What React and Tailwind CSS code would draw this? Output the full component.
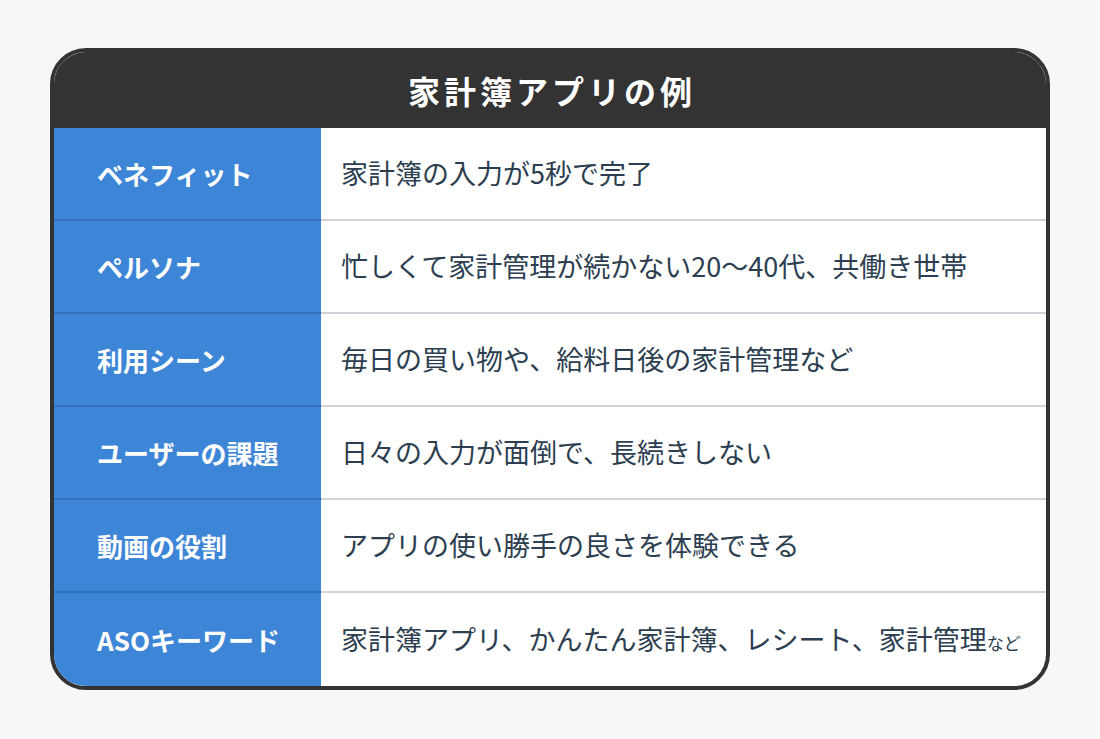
import React from "react";

const rows = [
  { label: "ベネフィット", text: "家計簿の入力が5秒で完了" },
  { label: "ペルソナ", text: "忙しくて家計管理が続かない20〜40代、共働き世帯" },
  { label: "利用シーン", text: "毎日の買い物や、給料日後の家計管理など" },
  { label: "ユーザーの課題", text: "日々の入力が面倒で、長続きしない" },
  { label: "動画の役割", text: "アプリの使い勝手の良さを体験できる" },
  { label: "ASOキーワード", text: "家計簿アプリ、かんたん家計簿、レシート、家計管理", small: "など" },
];

export default function App() {
  return (
    <div
      className="w-full h-screen bg-[#f7f7f7] flex justify-center pt-[48px]"
      style={{ fontFamily: '"Noto Sans CJK JP", "Noto Sans", sans-serif' }}
    >
      <div className="w-[1000px] h-[642px] border-4 border-[#333333] rounded-[36px] overflow-hidden flex flex-col bg-white">
        <div className="h-[76px] bg-[#333333] flex items-center justify-center text-white text-[32px] font-bold tracking-[4px] pl-[4px]">
          家計簿アプリの例
        </div>
        {rows.map((r, i) => (
          <div key={r.label} className="flex-1 flex">
            <div
              className={`w-[267px] bg-[#3d85d6] flex items-center pl-[43px] text-white text-[26px] font-bold ${
                i < rows.length - 1 ? "border-b-2 border-[#3470bb]" : ""
              }`}
            >
              {r.label}
            </div>
            <div
              className={`flex-1 flex items-center pl-[20px] text-[#2c3e50] text-[27px] whitespace-nowrap ${
                i < rows.length - 1 ? "border-b-2 border-[#d2d2da]" : ""
              }`}
            >
              <span>
                {r.text}
                {r.small && <span className="text-[17px]">{r.small}</span>}
              </span>
            </div>
          </div>
        ))}
      </div>
    </div>
  );
}
